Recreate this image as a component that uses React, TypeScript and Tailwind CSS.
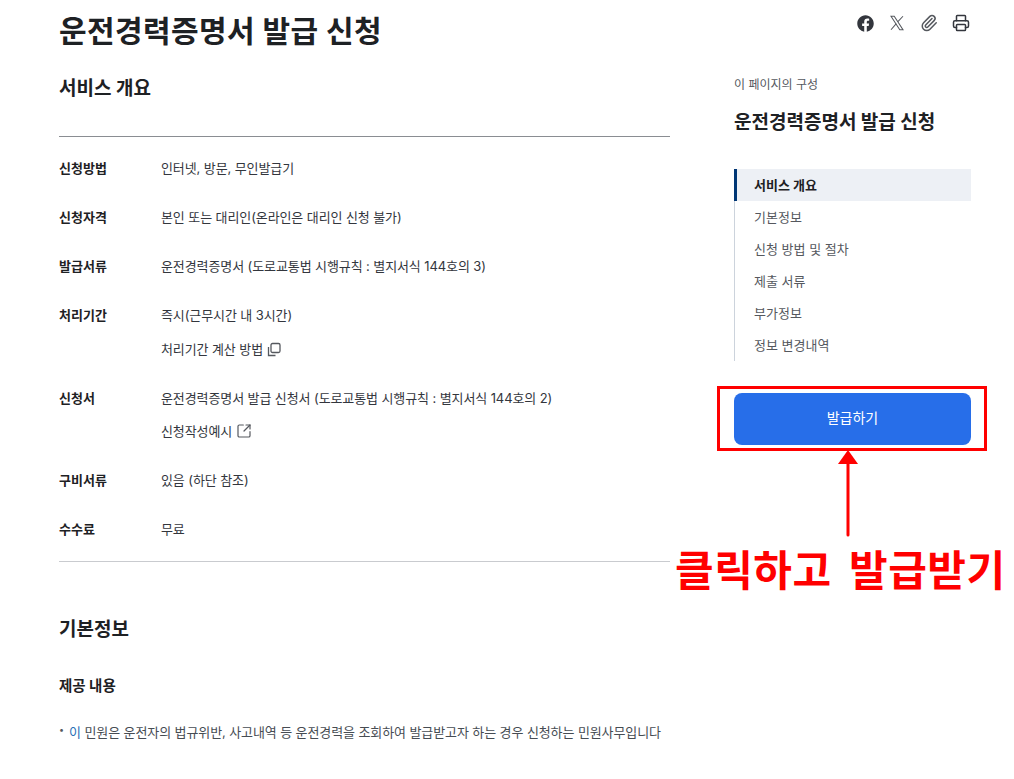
import { Paperclip, Printer, SquareArrowOutUpRight } from 'lucide-react'
import { FaFacebook } from 'react-icons/fa'

const FONT = 'font-["Inter","Noto_Sans_CJK_KR",sans-serif]'

const NAV = ['기본정보', '신청 방법 및 절차', '제출 서류', '부가정보', '정보 변경내역']

function Row({ label, children }: { label: string; children: React.ReactNode }) {
  return (
    <div className="flex">
      <div className="w-[102px] shrink-0 text-[13px] leading-[24px] font-bold text-[#1e2124]">{label}</div>
      <div className="flex flex-col gap-[10px] text-[13px] leading-[24px] tracking-[-0.1px] text-[#33363d]">{children}</div>
    </div>
  )
}

export default function App() {
  return (
    <div className={`${FONT} relative h-[779px] w-[1014px] overflow-hidden bg-white`}>
      <div className="flex pl-[59px] pr-[43px]">
        {/* Main */}
        <div className="w-[611px] shrink-0">
          <h1 className="mt-[9px] text-[30px] leading-[44px] font-bold tracking-[0.4px] text-[#1e2124]">운전경력증명서 발급 신청</h1>
          <h2 className="mt-[22px] text-[19px] leading-[28px] font-bold text-[#1e2124]">서비스 개요</h2>
          <hr className="mt-[33px] border-[#8a8d92]" />
          <div className="mt-[19px] flex flex-col gap-[25px]">
            <Row label="신청방법"><span>인터넷, 방문, 무인발급기</span></Row>
            <Row label="신청자격"><span>본인 또는 대리인(온라인은 대리인 신청 불가)</span></Row>
            <Row label="발급서류"><span>운전경력증명서 (도로교통법 시행규칙 : 별지서식 144호의 3)</span></Row>
            <Row label="처리기간">
              <span>즉시(근무시간 내 3시간)</span>
              <span className="flex items-center gap-[4px]">
                처리기간 계산 방법
                <svg width="15" height="15" viewBox="0 0 15 15" fill="none" stroke="#55585e" strokeWidth="1.3">
                  <rect x="4" y="1.5" width="9" height="9" rx="1.5" />
                  <path d="M1.5 5v8.5h7" />
                </svg>
              </span>
            </Row>
            <Row label="신청서">
              <span>운전경력증명서 발급 신청서 (도로교통법 시행규칙 : 별지서식 144호의 2)</span>
              <span className="-mt-px flex items-center gap-[4px]">신청작성예시 <SquareArrowOutUpRight size={16} strokeWidth={1.8} className="text-[#55585e]" /></span>
            </Row>
            <Row label="구비서류"><span>있음 (하단 참조)</span></Row>
            <Row label="수수료"><span>무료</span></Row>
          </div>
          <hr className="mt-[20px] border-[#c9cbcf]" />
          <h2 className="mt-[54px] text-[19px] leading-[28px] font-bold text-[#1e2124]">기본정보</h2>
          <h3 className="mt-[30px] text-[14.5px] leading-[24px] font-bold text-[#1e2124]">제공 내용</h3>
          <p className="mt-[22px] flex text-[13px] leading-[24px] tracking-[-0.1px] text-[#464c53]">
            <span className="w-[10px] -translate-y-[2px] text-[9px] text-[#55585e]">•</span>
            <span><span className="text-[#2a6fb5]">이</span> 민원은 운전자의 법규위반, 사고내역 등 운전경력을 조회하여 발급받고자 하는 경우 신청하는 민원사무입니다</span>
          </p>
        </div>

        {/* Side */}
        <div className="ml-[64px] w-[237px] shrink-0">
          <div className="flex h-[36px] items-center justify-end gap-[14px] pt-[10px] pr-[1px] text-[#33363d]">
            <FaFacebook size={17} />
            <svg width="18" height="18" viewBox="0 0 24 24" fill="none" stroke="#55585e" strokeWidth="1.4">
              <path d="M4 3l11.7 18H20L8.3 3z" />
              <path d="M4 21l7-8.2m2.2-2.6L20 3" />
            </svg>
            <Paperclip size={18} className="text-[#55585e]" />
            <Printer size={18} />
          </div>
          <p className="mt-[39px] text-[12px] leading-[20px] text-[#55585e]">이 페이지의 구성</p>
          <p className="mt-[14px] text-[19px] leading-[28px] font-bold text-[#1e2124]">운전경력증명서 발급 신청</p>
          <nav className="mt-[32px] flex flex-col border-l border-[#ccd3dc]">
            <a className="-ml-px h-[32px] border-l-[3px] border-[#003675] bg-[#edf0f5] pl-[17px] text-[13px] leading-[32px] font-bold text-[#1e2124]">서비스 개요</a>
            {NAV.map(n => (
              <a key={n} className="h-[32px] pl-[19px] text-[13px] leading-[32px] text-[#55585e]">{n}</a>
            ))}
          </nav>
          <button className="mt-[32px] h-[52px] w-full rounded-[8px] bg-[#276ee9] pb-[4px] text-[14px] text-white">발급하기</button>
        </div>
      </div>

      {/* Annotation */}
      <div className="absolute top-[386px] left-[717px] h-[65px] w-[270px] border-[3px] border-[#ff0000]" />
      <svg className="absolute top-[448px] left-[836px]" width="24" height="90" viewBox="0 0 24 90">
        <path d="M12 14 L12 87" stroke="#ff0000" strokeWidth="3" strokeLinecap="round" />
        <path d="M12 2 L22 16 L2 16 Z" fill="#ff0000" />
      </svg>
      <div className="absolute top-[540px] left-[675px] text-[42px] leading-[62px] font-bold tracking-[0.5px] [word-spacing:7px] whitespace-nowrap text-[#ff0000]">클릭하고 발급받기</div>
    </div>
  )
}
